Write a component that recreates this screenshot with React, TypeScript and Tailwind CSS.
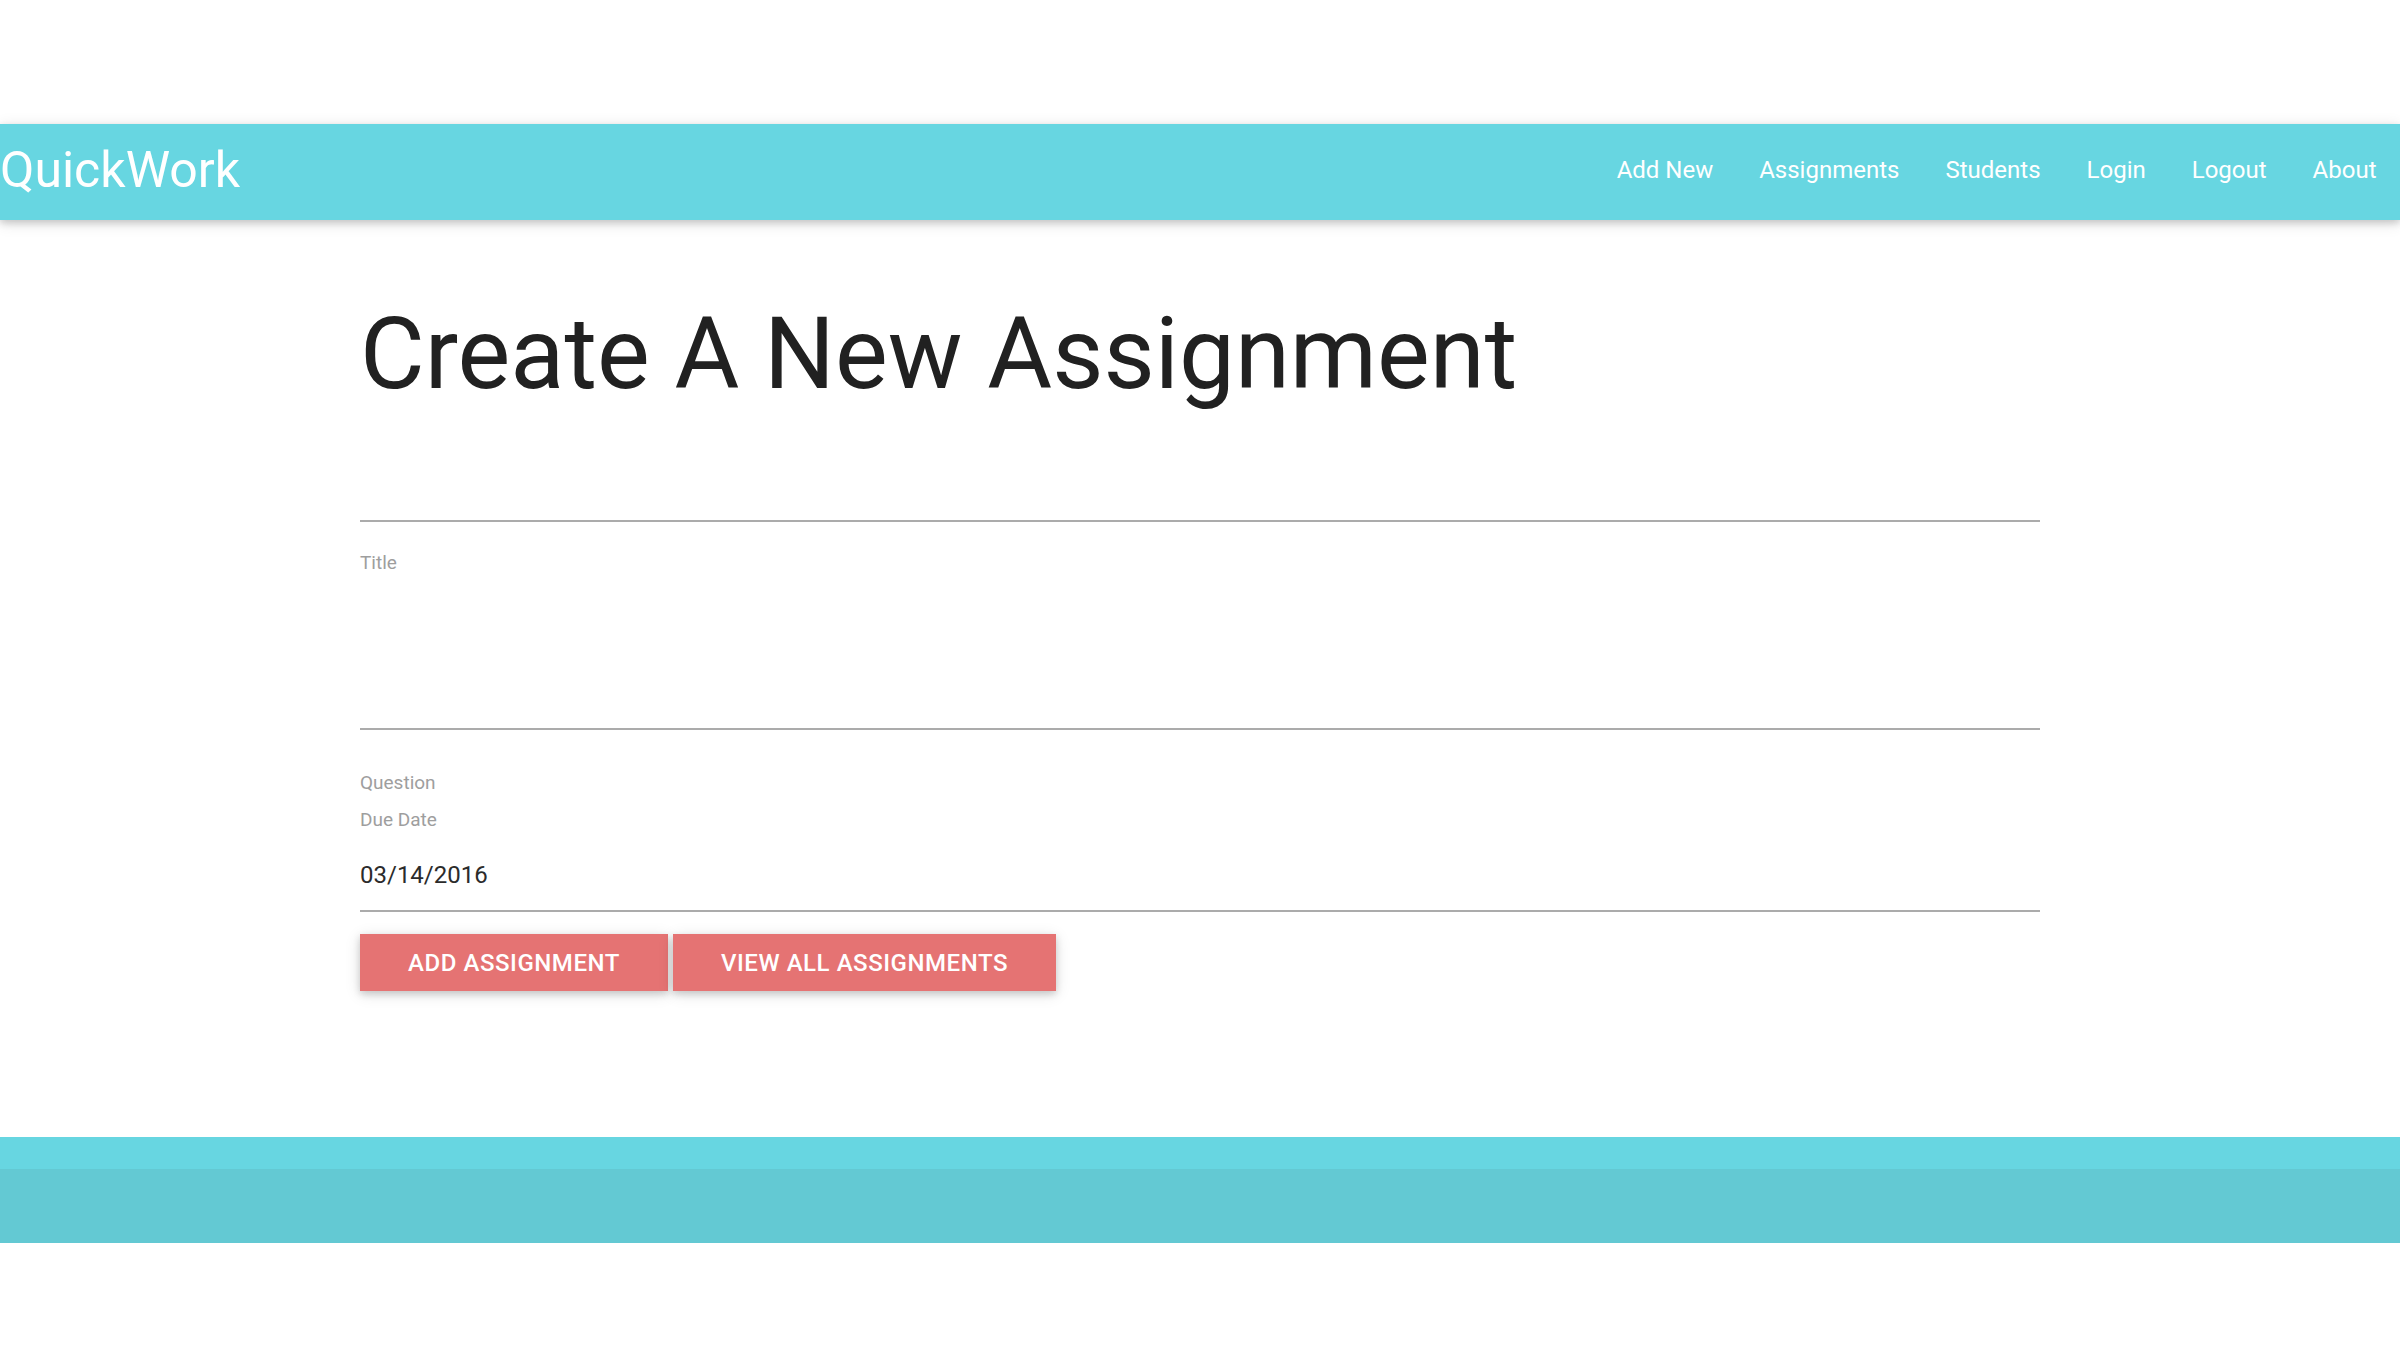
import React from "react";

const links = ["Add New", "Assignments", "Students", "Login", "Logout", "About"];

export default function App() {
  return (
    <div className="min-h-[1350px] bg-white" style={{ fontFamily: "Roboto, 'Noto Sans', sans-serif" }}>
      <div className="h-[124px]" />
      <nav className="relative z-10 flex h-[96px] items-center justify-between bg-[#67d6e1] text-white shadow-[0_3px_7px_0_rgba(0,0,0,0.16),0_3px_15px_0_rgba(0,0,0,0.12)]">
        <a className="-mt-[4px] block text-[50px] leading-[96px]">QuickWork</a>
        <ul className="-mt-[4px] flex pr-[0.5px]">
          {links.map((l) => (
            <li key={l} className="px-[23px] text-[24px] leading-[96px]">
              {l}
            </li>
          ))}
        </ul>
      </nav>
      <main className="mx-auto w-[1680px]">
        <h1 className="mt-[79px] text-[99.5px] leading-[111px] text-[#212121]">Create A New Assignment</h1>
        <div className="mt-[110px] h-[2px] bg-[#ababab]" />
        <div className="mt-[30px] text-[19px] leading-[22px] text-[#9e9e9e]">Title</div>
        <div className="mt-[154px] h-[2px] bg-[#ababab]" />
        <div className="mt-[42px] text-[19px] leading-[22px] text-[#9e9e9e]">Question</div>
        <div className="mt-[15px] text-[19px] leading-[22px] text-[#9e9e9e]">Due Date</div>
        <div className="mt-[30px] text-[24px] leading-[28px] text-[#2b2b2b]">03/14/2016</div>
        <div className="mt-[21px] h-[2px] bg-[#ababab]" />
        <div className="mt-[22px] flex gap-[5px]">
          <button className="h-[57px] bg-[#e57373] px-[48px] text-[24px] font-medium uppercase tracking-[0.55px] text-white shadow-[0_3px_7px_0_rgba(0,0,0,0.16),0_3px_15px_0_rgba(0,0,0,0.12)]">
            Add Assignment
          </button>
          <button className="h-[57px] bg-[#e57373] px-[48px] text-[24px] font-medium uppercase tracking-[0.55px] text-white shadow-[0_3px_7px_0_rgba(0,0,0,0.16),0_3px_15px_0_rgba(0,0,0,0.12)]">
            View All Assignments
          </button>
        </div>
      </main>
      <footer className="mt-[146px] bg-[#67d6e1] pt-[32px]">
        <div className="h-[74px] bg-[#63c9d3]" />
      </footer>
    </div>
  );
}
